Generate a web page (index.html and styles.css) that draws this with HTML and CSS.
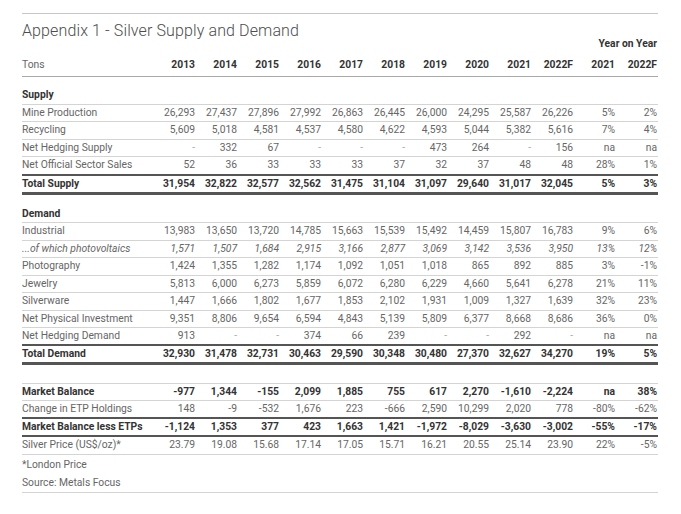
FILE: index.html
```html
<!DOCTYPE html>
<html>
<head>
<meta charset="utf-8">
<link rel="stylesheet" href="styles.css">
</head>
<body>
<div class="page">
  <div class="toprule"></div>
  <h1 class="title">Appendix 1 - Silver Supply and Demand</h1>
  <div class="yoy">Year on Year</div>
  <div class="row head">
    <span>Tons</span>
    <span class="y">2013</span><span class="y">2014</span><span class="y">2015</span><span class="y">2016</span><span class="y">2017</span><span class="y">2018</span><span class="y">2019</span><span class="y">2020</span><span class="y">2021</span><span class="y">2022F</span><span class="y">2021</span><span class="y">2022F</span>
  </div>

  <div class="section s1">
    <div class="row b"><span>Supply</span></div>
    <div class="row"><span>Mine Production</span><span>26,293</span><span>27,437</span><span>27,896</span><span>27,992</span><span>26,863</span><span>26,445</span><span>26,000</span><span>24,295</span><span>25,587</span><span>26,226</span><span>5%</span><span>2%</span></div>
    <div class="row"><span>Recycling</span><span>5,609</span><span>5,018</span><span>4,581</span><span>4,537</span><span>4,580</span><span>4,622</span><span>4,593</span><span>5,044</span><span>5,382</span><span>5,616</span><span>7%</span><span>4%</span></div>
    <div class="row"><span>Net Hedging Supply</span><span class="d">-</span><span>332</span><span>67</span><span class="d">-</span><span class="d">-</span><span class="d">-</span><span>473</span><span>264</span><span class="d">-</span><span>156</span><span>na</span><span>na</span></div>
    <div class="row dk tall"><span>Net Official Sector Sales</span><span>52</span><span>36</span><span>33</span><span>33</span><span>33</span><span>37</span><span>32</span><span>37</span><span>48</span><span>48</span><span>28%</span><span>1%</span></div>
    <div class="row b tot"><span>Total Supply</span><span>31,954</span><span>32,822</span><span>32,577</span><span>32,562</span><span>31,475</span><span>31,104</span><span>31,097</span><span>29,640</span><span>31,017</span><span>32,045</span><span>5%</span><span>3%</span></div>
  </div>

  <div class="section s2">
    <div class="row b"><span>Demand</span></div>
    <div class="row"><span>Industrial</span><span>13,983</span><span>13,650</span><span>13,720</span><span>14,785</span><span>15,663</span><span>15,539</span><span>15,492</span><span>14,459</span><span>15,807</span><span>16,783</span><span>9%</span><span>6%</span></div>
    <div class="row i"><span>...of which photovoltaics</span><span>1,571</span><span>1,507</span><span>1,684</span><span>2,915</span><span>3,166</span><span>2,877</span><span>3,069</span><span>3,142</span><span>3,536</span><span>3,950</span><span>13%</span><span>12%</span></div>
    <div class="row"><span>Photography</span><span>1,424</span><span>1,355</span><span>1,282</span><span>1,174</span><span>1,092</span><span>1,051</span><span>1,018</span><span>865</span><span>892</span><span>885</span><span>3%</span><span>-1%</span></div>
    <div class="row"><span>Jewelry</span><span>5,813</span><span>6,000</span><span>6,273</span><span>5,859</span><span>6,072</span><span>6,280</span><span>6,229</span><span>4,660</span><span>5,641</span><span>6,278</span><span>21%</span><span>11%</span></div>
    <div class="row"><span>Silverware</span><span>1,447</span><span>1,666</span><span>1,802</span><span>1,677</span><span>1,853</span><span>2,102</span><span>1,931</span><span>1,009</span><span>1,327</span><span>1,639</span><span>32%</span><span>23%</span></div>
    <div class="row"><span>Net Physical Investment</span><span>9,351</span><span>8,806</span><span>9,654</span><span>6,594</span><span>4,843</span><span>5,139</span><span>5,809</span><span>6,377</span><span>8,668</span><span>8,686</span><span>36%</span><span>0%</span></div>
    <div class="row dk"><span>Net Hedging Demand</span><span>913</span><span class="d">-</span><span class="d">-</span><span>374</span><span>66</span><span>239</span><span class="d">-</span><span class="d">-</span><span>292</span><span class="d">-</span><span>na</span><span>na</span></div>
    <div class="row b tot"><span>Total Demand</span><span>32,930</span><span>31,478</span><span>32,731</span><span>30,463</span><span>29,590</span><span>30,348</span><span>30,480</span><span>27,370</span><span>32,627</span><span>34,270</span><span>19%</span><span>5%</span></div>
  </div>

  <div class="section s3">
    <div class="row b"><span>Market Balance</span><span>-977</span><span>1,344</span><span>-155</span><span>2,099</span><span>1,885</span><span>755</span><span>617</span><span>2,270</span><span>-1,610</span><span>-2,224</span><span>na</span><span>38%</span></div>
    <div class="row dk"><span>Change in ETP Holdings</span><span>148</span><span>-9</span><span>-532</span><span>1,676</span><span>223</span><span>-666</span><span>2,590</span><span>10,299</span><span>2,020</span><span>778</span><span>-80%</span><span>-62%</span></div>
    <div class="row b dk"><span>Market Balance less ETPs</span><span>-1,124</span><span>1,353</span><span>377</span><span>423</span><span>1,663</span><span>1,421</span><span>-1,972</span><span>-8,029</span><span>-3,630</span><span>-3,002</span><span>-55%</span><span>-17%</span></div>
    <div class="row"><span>Silver Price (US$/oz)*</span><span>23.79</span><span>19.08</span><span>15.68</span><span>17.14</span><span>17.05</span><span>15.71</span><span>16.21</span><span>20.55</span><span>25.14</span><span>23.90</span><span>22%</span><span>-5%</span></div>
  </div>

  <div class="notes">
    <div class="note">*London Price</div>
    <div class="note">Source: Metals Focus</div>
  </div>
</div>
</body>
</html>
```

FILE: styles.css
```css
body {
  margin: 0;
  background: #ffffff;
  font-family: Roboto, "Liberation Sans", Arial, sans-serif;
  color: #666666;
}

.page {
  width: 636px;
  padding: 13px 0 0 22px;
}

.toprule {
  border-top: 1px solid #c6c6c6;
}

.title {
  margin: 9px 0 0;
  font-size: 16px;
  line-height: 15px;
  font-weight: 300;
  letter-spacing: 0.12px;
  color: #4d4d4d;
}

.yoy {
  height: 12px;
  line-height: 12px;
  font-size: 10.3px;
  font-weight: 700;
  color: #333333;
  text-align: right;
  padding-right: 1px;
}

.row {
  display: grid;
  grid-template-columns: 131px repeat(12, 42px);
  align-items: center;
  height: 17.5px;
  box-sizing: border-box;
  border-bottom: 1px solid #d4d4d4;
  font-size: 10.3px;
  line-height: 12px;
  white-space: nowrap;
}

.row > span:not(:first-child) {
  text-align: right;
}

.head {
  height: 27px;
  align-items: end;
  padding-bottom: 5px;
  border-bottom-color: #a9a9a9;
}

.head .y,
.b {
  font-weight: 700;
  color: #333333;
}

.i {
  font-style: italic;
}

.d {
  color: #aaaaaa;
}

.dk {
  border-bottom: 2px solid #555555;
}

.tall {
  height: 18.5px;
}

.tot {
  height: 19px;
  border-bottom: 3px solid #555555;
}

.s1 {
  margin-top: 10px;
}

.s2 {
  margin-top: 11px;
}

.s3 {
  margin-top: 18px;
  border-top: 1px solid #d4d4d4;
}

.s3 .row {
  height: 17.8px;
}

.notes {
  margin-top: 1px;
  border-bottom: 1px solid #d4d4d4;
}

.note {
  height: 18px;
  line-height: 18px;
  font-size: 10.3px;
}
```
